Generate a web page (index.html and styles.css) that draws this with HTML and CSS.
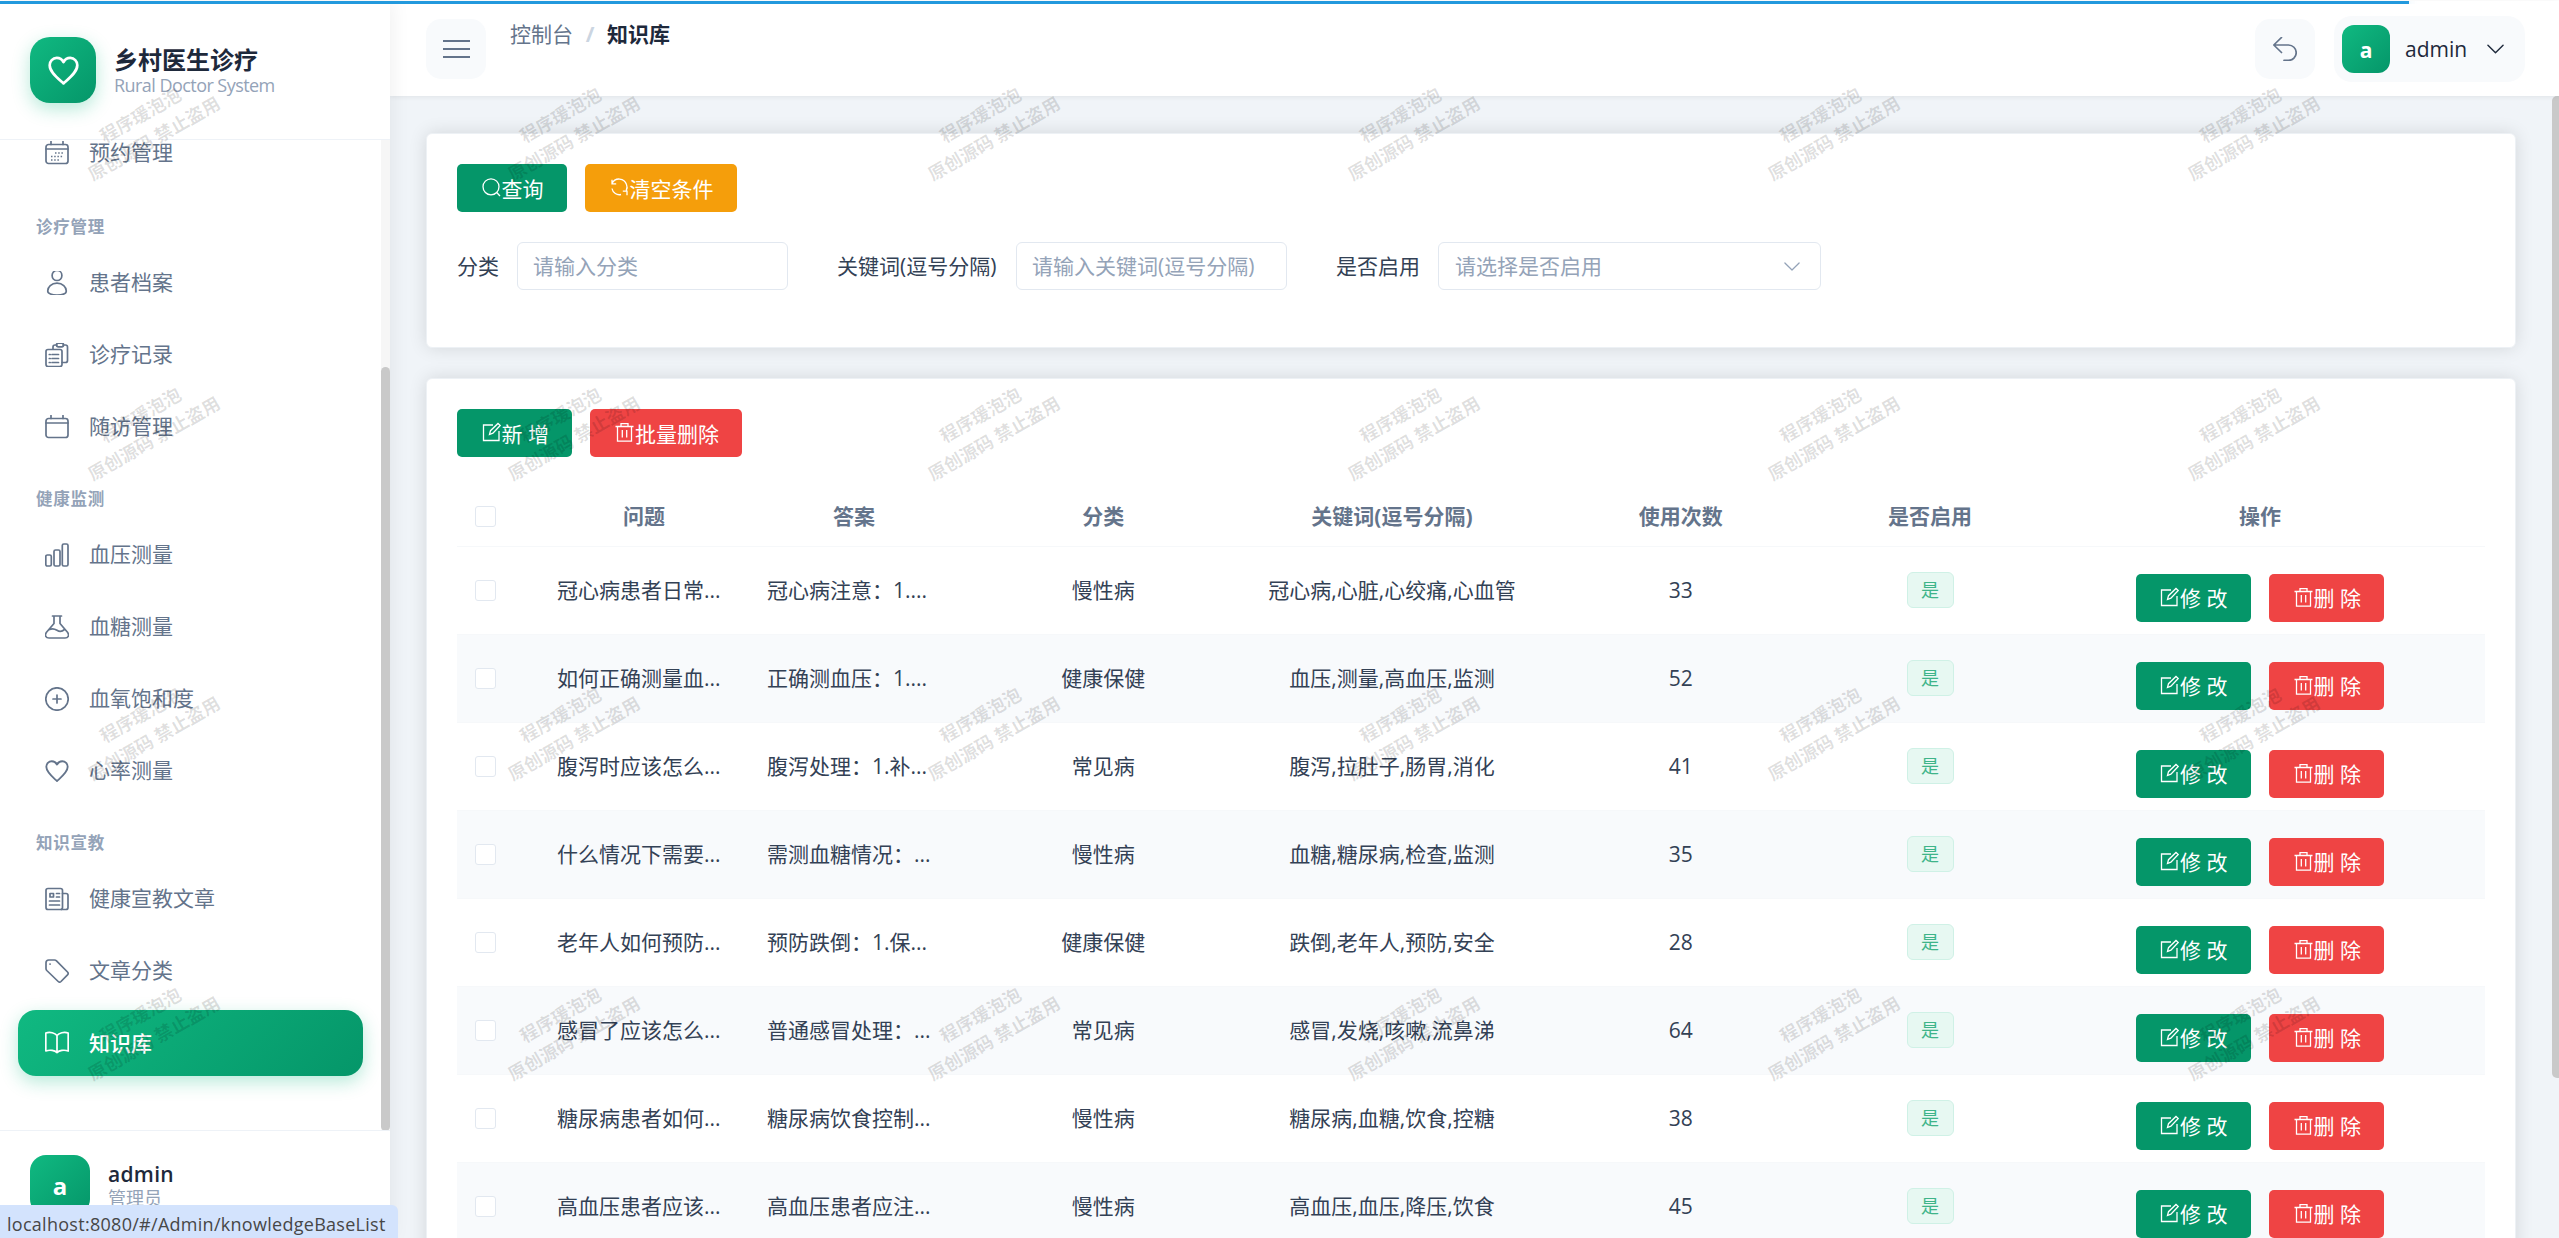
FILE: index.html
```html
<!DOCTYPE html>
<html lang="zh-CN">
<head>
    <meta charset="UTF-8">
    <title>知识库 | 乡村医生诊疗</title>
    <link rel="stylesheet" href="styles.css">
</head>
<body>
    <svg class="sprite" width="0" height="0">
        <symbol id="i-heart" viewBox="1 1 22 22"><path d="M12 21.2C8 17.6 2.200 13.200 2.200 8.200A5 5 0 0 1 7.200 3.100c2 0 3.800 1 4.800 2.900 1-1.900 2.800-2.900 4.800-2.900a5 5 0 0 1 5 5.100c0 5-5.800 9.400-9.800 13z"/></symbol>
        <symbol id="i-date" viewBox="0 0 24 24"><rect x="1" y="3.500" width="22" height="19" rx="2.500"/><path d="M1 8h22M6 .5v3M18 .5v3"/><path class="dots" d="M10 12h8.500M6 15.500h12.500M6 19h8.500"/></symbol>
        <symbol id="i-calendar" viewBox="0 0 24 24"><rect x="1" y="3.500" width="22" height="19" rx="2.500"/><path d="M1 8h22M6 .5v3M18 .5v3"/></symbol>
        <symbol id="i-user" viewBox="0 0 24 24"><ellipse cx="12" cy="4.500" rx="4.900" ry="5"/><path d="M2.700 20c0-4 3.700-7.800 9.300-7.800s9.300 3.800 9.300 7.800c0 2.800-4.400 4-9.300 4s-9.300-1.200-9.300-4z"/></symbol>
        <symbol id="i-record" viewBox="0 0 24 24"><path d="M8 6V4a2 2 0 0 1 2-2h2M18 2h2.500a2 2 0 0 1 2 2v13.500a2 2 0 0 1-2 2H17"/><rect x="11.500" y="0.200" width="7" height="3.600" rx="1.500"/><rect x="1" y="6.500" width="16" height="17" rx="2"/><path d="M7 11.500h6.500M7 15.500h6.500M7 19.500h6.500M4.300 11.500h.9M4.300 15.500h.9M4.300 19.500h.9"/></symbol>
        <symbol id="i-bars" viewBox="0 0 24 24"><rect x="0.800" y="12" width="5.500" height="11" rx="1.500"/><rect x="9" y="7" width="6" height="16" rx="1.500"/><rect x="17.300" y="1" width="5.700" height="22" rx="1.500"/></symbol>
        <symbol id="i-flask" viewBox="0 0 24 24"><path d="M7.500 1h9M9 1v7.500L1.500 17.300C-.8 20.500 1 23 4 23h16c3 0 4.800-2.500 2.500-5.700L15 8.500V1M4.500 14.500c3-1.500 5.500-.5 7.500.8s5 1.500 7.500-.8"/></symbol>
        <symbol id="i-plus" viewBox="0 0 24 24"><circle cx="12" cy="12" r="11.200"/><path d="M12 8v8M8 12h8"/></symbol>
        <symbol id="i-news" viewBox="0 0 24 24"><rect x="1" y="1.500" width="16.500" height="21" rx="2"/><path d="M17.500 6.500H21a2 2 0 0 1 2 2V20.500a2 2 0 0 1-2 2h-4.500M4.500 14h10M4.500 18h10M11.500 6.500h3M11.500 10h3"/><rect x="5" y="6.500" width="3.500" height="3.500"/></symbol>
        <symbol id="i-tag" viewBox="0 0 24 24"><path d="M1 9.500V3.800A2.800 2.800 0 0 1 3.800 1H9.500a3 3 0 0 1 2 .8l11 11.200a2 2 0 0 1 0 2.800l-6.500 6.700a2 2 0 0 1-2.800 0L1.800 11.500a3 3 0 0 1-.8-2z"/><path d="M5 5.100h.1"/></symbol>
        <symbol id="i-book" viewBox="0 0 24 24"><path d="M12 4.500C10 2 5 .5.800 2v18c4.200-1.500 9-.5 11.200 1.500C14.200 19.500 19 18.500 23.200 20V2C19 .5 14 2 12 4.500zM12 4.500v17"/></symbol>
        <symbol id="i-menu" viewBox="0 0 27 24"><path d="M0 4h27M0 12h27M0 20h27"/></symbol>
        <symbol id="i-back" viewBox="0 0 24 24"><path d="M8.500 .5.800 8l7.700 7.500M.8 8h14.700a7.700 7.700 0 0 1 0 15.400H11"/></symbol>
        <symbol id="i-down" viewBox="0 0 18 10"><path d="M1 1l8 8 8-8"/></symbol>
        <symbol id="i-search" viewBox="0 0 21 21"><circle cx="10" cy="9.800" r="8"/><path d="M15.700 15.500l3.300 3.500"/></symbol>
        <symbol id="i-refresh" viewBox="0 0 21 21"><path d="M3 2.800v4h4.200M3 6.500A7.800 7.800 0 0 1 17.500 7.500c1 2.200.8 4-.3 6M18 18.200V14.200H13.800M12 17.500C8 18.500 3.800 16 3 11.500"/></symbol>
        <symbol id="i-edit" viewBox="0 0 21 21"><path d="M12 3H2.500v15.500H18V9"/><path d="M8.500 12.500l1-3.800L17 1.500l2.200 2-7.300 7.700z"/></symbol>
        <symbol id="i-trash" viewBox="0 0 21 21"><path d="M1.500 4.500h18M7 4.200V1.700h7v2.500M3.500 4.500v14.700h14V4.500M8.300 8v7.500M12.700 8v7.500"/></symbol>
    </svg>

    <div class="progress"></div>

    <div class="layout">
        <div class="sidebar">
            <div class="brand">
                <div class="logo"><svg><use href="#i-heart"/></svg></div>
                <div class="brand-text">
                    <div class="brand-title">乡村医生诊疗</div>
                    <div class="brand-sub">Rural Doctor System</div>
                </div>
            </div>
            <div class="menu-wrap">
                <div class="menu">
                    <a class="menu-item"><svg><use href="#i-date"/></svg><span>预约管理</span></a>
                    <div class="menu-title">诊疗管理</div>
                    <a class="menu-item"><svg><use href="#i-user"/></svg><span>患者档案</span></a>
                    <a class="menu-item"><svg><use href="#i-record"/></svg><span>诊疗记录</span></a>
                    <a class="menu-item"><svg><use href="#i-calendar"/></svg><span>随访管理</span></a>
                    <div class="menu-title">健康监测</div>
                    <a class="menu-item"><svg><use href="#i-bars"/></svg><span>血压测量</span></a>
                    <a class="menu-item"><svg><use href="#i-flask"/></svg><span>血糖测量</span></a>
                    <a class="menu-item"><svg><use href="#i-plus"/></svg><span>血氧饱和度</span></a>
                    <a class="menu-item"><svg><use href="#i-heart"/></svg><span>心率测量</span></a>
                    <div class="menu-title">知识宣教</div>
                    <a class="menu-item"><svg><use href="#i-news"/></svg><span>健康宣教文章</span></a>
                    <a class="menu-item"><svg><use href="#i-tag"/></svg><span>文章分类</span></a>
                    <a class="menu-item active"><svg><use href="#i-book"/></svg><span>知识库</span></a>
                </div>
                <div class="menu-track"><div class="menu-thumb"></div></div>
            </div>
            <div class="side-user">
                <div class="avatar avatar-lg">a</div>
                <div class="side-user-text">
                    <div class="side-user-name">admin</div>
                    <div class="side-user-role">管理员</div>
                </div>
            </div>
        </div>

        <div class="main">
            <div class="topbar">
                <button class="square-button"><svg class="menu-icon"><use href="#i-menu"/></svg></button>
                <div class="breadcrumb">
                    <span>控制台</span><b class="slash">/</b><b>知识库</b>
                </div>
                <button class="square-button back"><svg class="back-icon"><use href="#i-back"/></svg></button>
                <div class="user-box">
                    <div class="avatar">a</div>
                    <span class="user-name">admin</span>
                    <svg class="user-arrow"><use href="#i-down"/></svg>
                </div>
            </div>

            <div class="content">
                <div class="pages">
                    <div class="card search-card">
                        <div class="buttons">
                            <button class="btn btn-green"><svg><use href="#i-search"/></svg>查询</button>
                            <button class="btn btn-orange"><svg><use href="#i-refresh"/></svg>清空条件</button>
                        </div>
                        <div class="search-form">
                            <label class="label-category">分类</label>
                            <input class="field" type="text" placeholder="请输入分类">
                            <label class="label-keyword">关键词(逗号分隔)</label>
                            <input class="field" type="text" placeholder="请输入关键词(逗号分隔)">
                            <label class="label-enabled">是否启用</label>
                            <div class="field select"><span>请选择是否启用</span><svg><use href="#i-down"/></svg></div>
                        </div>
                    </div>

                    <div class="card table-card">
                        <div class="buttons">
                            <button class="btn btn-green"><svg><use href="#i-edit"/></svg>新 增</button>
                            <button class="btn btn-red"><svg><use href="#i-trash"/></svg>批量删除</button>
                        </div>
                        <table class="table">
                            <colgroup>
                                <col class="col-check"><col class="col-text"><col class="col-text">
                                <col><col><col>
                                <col class="col-text"><col class="col-action">
                            </colgroup>
                            <thead>
                                <tr>
                                    <th class="check"><span class="checkbox"></span></th>
                                    <th>问题</th>
                                    <th>答案</th>
                                    <th>分类</th>
                                    <th>关键词(逗号分隔)</th>
                                    <th>使用次数</th>
                                    <th>是否启用</th>
                                    <th>操作</th>
                                </tr>
                            </thead>
                            <tbody id="rows"></tbody>
                        </table>
                    </div>
                </div>
                <div class="page-thumb"></div>
            </div>
        </div>
    </div>

    <div class="watermark" id="watermark"></div>
    <div class="status-bar">localhost:8080/#/Admin/knowledgeBaseList</div>

    <script>
        const rows = [
            ['冠心病患者日常...', '冠心病注意：1....', '慢性病', '冠心病,心脏,心绞痛,心血管', 33],
            ['如何正确测量血...', '正确测血压：1....', '健康保健', '血压,测量,高血压,监测', 52],
            ['腹泻时应该怎么...', '腹泻处理：1.补...', '常见病', '腹泻,拉肚子,肠胃,消化', 41],
            ['什么情况下需要...', '需测血糖情况：...', '慢性病', '血糖,糖尿病,检查,监测', 35],
            ['老年人如何预防...', '预防跌倒：1.保...', '健康保健', '跌倒,老年人,预防,安全', 28],
            ['感冒了应该怎么...', '普通感冒处理：...', '常见病', '感冒,发烧,咳嗽,流鼻涕', 64],
            ['糖尿病患者如何...', '糖尿病饮食控制...', '慢性病', '糖尿病,血糖,饮食,控糖', 38],
            ['高血压患者应该...', '高血压患者应注...', '慢性病', '高血压,血压,降压,饮食', 45]
        ];

        document.getElementById('rows').innerHTML = rows.map(row => `
            <tr>
                <td class="check"><span class="checkbox"></span></td>
                <td class="long">${row[0]}</td>
                <td class="long">${row[1]}</td>
                <td>${row[2]}</td>
                <td>${row[3]}</td>
                <td>${row[4]}</td>
                <td><span class="tag">是</span></td>
                <td class="action">
                    <div class="actions">
                        <button class="btn btn-green"><svg><use href="#i-edit"/></svg>修 改</button>
                        <button class="btn btn-red"><svg><use href="#i-trash"/></svg>删 除</button>
                    </div>
                </td>
            </tr>
        `).join('');

        // 6 x 4 watermark tiles
        document.getElementById('watermark').innerHTML =
            '<div class="mark"><p>程序瑗泡泡<br>原创源码 禁止盗用</p></div>'.repeat(24);
    </script>
</body>
</html>
```
FILE: styles.css
```css
* {
    box-sizing: border-box;
}
body {
    margin: 0;
    padding-top: 1px;
    height: 1238px;
    overflow: hidden;
    font-family: "Open Sans", "Noto Sans CJK SC", sans-serif;
    font-size: 21px;
    line-height: 30px;
    color: #334155;
    background-color: #fff;
}
button, input {
    font-family: inherit;
    font-size: 21px;
}
svg {
    fill: none;
    stroke: currentColor;
    stroke-width: 1.7;
    stroke-linejoin: round;
    stroke-linecap: round;
    overflow: visible;
    flex-shrink: 0;
}
.sprite {
    position: absolute;
}
.dots {
    stroke-dasharray: 1.5 1.7;
    stroke-linecap: butt;
}
.progress {
    position: absolute;
    z-index: 20;
    top: 1px;
    left: 0;
    width: 2409px;
    height: 3px;
    background-color: #29d;
    box-shadow: 0 0 8px rgba(34, 153, 221, 0.4);
    clip-path: inset(0 -12px 0 0);
}
.layout {
    display: flex;
    height: 1237px;
}

/* sidebar */
.sidebar {
    width: 390px;
    flex-shrink: 0;
    display: flex;
    flex-direction: column;
    background-color: #fff;
    box-shadow: 3px 0 18px rgba(0, 0, 0, 0.06);
    z-index: 2;
}
.brand {
    display: flex;
    align-items: center;
    gap: 18px;
    height: 139px;
    padding: 0 30px;
    border-bottom: 1px solid #eef2f7;
    flex-shrink: 0;
}
.brand-text {
    padding-top: 2px;
}
.logo {
    width: 66px;
    height: 66px;
    border-radius: 20px;
    background: linear-gradient(135deg, #10b981, #059669);
    box-shadow: 0 6px 18px rgba(16, 185, 129, 0.3);
    color: #fff;
    display: flex;
    align-items: center;
    justify-content: center;
}
.logo svg {
    width: 31px;
    height: 31px;
    stroke-width: 1.9;
}
.brand-title {
    font-size: 24px;
    font-weight: bold;
    line-height: 28px;
    color: #1e293b;
}
.brand-sub {
    font-size: 18px;
    line-height: 22px;
    color: #94a3b8;
    letter-spacing: -0.55px;
}
.menu-wrap {
    flex: 1;
    min-height: 0;
    display: flex;
    overflow: hidden;
}
.menu {
    width: 381px;
    padding: 0 18px;
    margin-top: -20px;
}
.menu-item {
    display: flex;
    align-items: center;
    gap: 20px;
    height: 66px;
    padding-left: 27px;
    margin-bottom: 6px;
    border-radius: 18px;
    color: #64748b;
}
.menu-item:first-child {
    margin-bottom: 8px;
}
.menu-item svg {
    width: 24px;
    height: 24px;
}
.menu-item span {
    padding-bottom: 2px;
}
.menu-item.active {
    background: linear-gradient(135deg, #10b981, #059669);
    box-shadow: 0 6px 18px rgba(16, 185, 129, 0.3);
    color: #fff;
    font-weight: 500;
}
.menu-item.active span {
    padding-bottom: 0;
}
.menu-title {
    height: 56px;
    padding: 24px 18px 14px;
    font-size: 16.5px;
    line-height: 18px;
    letter-spacing: 0.75px;
    font-weight: bold;
    color: #94a3b8;
}
.menu-track {
    width: 9px;
    padding-top: 227px;
    background-color: #f6f6f6;
}
.menu-thumb {
    height: 764px;
    border-radius: 5px;
    background-color: #c9c9c9;
}
.side-user {
    display: flex;
    gap: 18px;
    height: 108px;
    padding: 24px 30px 0;
    border-top: 1px solid #eef2f7;
    flex-shrink: 0;
}
.side-user-text {
    padding-top: 6px;
}
.side-user-name {
    font-weight: 600;
    line-height: 26px;
    letter-spacing: 0.3px;
    color: #1e293b;
}
.side-user-role {
    font-size: 18px;
    line-height: 23px;
    color: #94a3b8;
}
.avatar {
    width: 48px;
    height: 48px;
    border-radius: 12px;
    background: linear-gradient(135deg, #10b981, #059669);
    color: #fff;
    font-weight: bold;
    line-height: 50px;
    text-align: center;
}
.avatar-lg {
    width: 60px;
    height: 60px;
    border-radius: 16px;
    font-size: 24px;
    line-height: 62px;
}

/* top bar */
.main {
    flex: 1;
    min-width: 0;
    display: flex;
    flex-direction: column;
}
.topbar {
    display: flex;
    align-items: center;
    height: 95px;
    flex-shrink: 0;
    padding: 1px 34px 0 36px;
    background-color: #fff;
    box-shadow: 0 1px 5px rgba(0, 0, 0, 0.07);
    z-index: 1;
}
.square-button {
    display: flex;
    align-items: center;
    justify-content: center;
    width: 60px;
    height: 60px;
    padding: 0;
    border: none;
    border-radius: 15px;
    background-color: #f8fafc;
    color: #64748b;
}
.menu-icon {
    width: 27px;
    height: 24px;
    stroke-width: 2.2;
}
.back-icon {
    width: 24px;
    height: 24px;
}
.breadcrumb {
    align-self: flex-start;
    display: flex;
    margin-left: 24px;
    padding-top: 17px;
    color: #64748b;
}
.breadcrumb b {
    color: #1e293b;
}
.breadcrumb .slash {
    width: 34px;
    text-align: center;
    color: #cbd5e1;
}
.back {
    margin-left: auto;
}
.user-box {
    display: flex;
    align-items: center;
    width: 191px;
    height: 66px;
    margin-left: 19px;
    padding-left: 8px;
    border-radius: 18px;
    background-color: #f8fafc;
    color: #1e293b;
}
.user-name {
    width: 82px;
    margin-left: 15px;
}
.user-arrow {
    width: 17px;
    height: 10px;
    stroke-width: 1.5;
}

/* content */
.content {
    flex: 1;
    min-height: 0;
    display: flex;
    overflow: hidden;
    background-color: #f0f4f8;
}
.pages {
    flex: 1;
    padding: 37px 36px 0;
}
.page-thumb {
    width: 7px;
    height: 982px;
    border-radius: 5px 0 0 5px;
    background-color: #c9c9c9;
}
.card {
    padding: 30px;
    background-color: #fff;
    border: 1px solid #edf1f5;
    border-radius: 6px;
    box-shadow: 0 0 18px rgba(0, 0, 0, 0.12);
}
.search-card {
    height: 215px;
    margin-bottom: 30px;
}
.table-card {
    height: 1200px;
}
.buttons {
    display: flex;
    gap: 18px;
}
.btn {
    display: flex;
    align-items: center;
    justify-content: center;
    height: 48px;
    padding: 0 23.500px 1px;
    border: none;
    border-radius: 5px;
    color: #fff;
    white-space: nowrap;
}
.btn svg {
    width: 21px;
    height: 21px;
    stroke-width: 1.3;
    stroke-linejoin: miter;
    stroke-linecap: butt;
}
.btn-green {
    background-color: #059669;
}
.btn-orange {
    background-color: #f59e0b;
}
.btn-red {
    background-color: #ef4444;
}
.search-form {
    display: flex;
    align-items: center;
    margin-top: 30px;
}
.label-category {
    width: 60px;
}
.label-keyword {
    width: 179px;
    margin-left: 49px;
}
.label-enabled {
    width: 102px;
    margin-left: 49px;
}
.field {
    width: 271px;
    height: 48px;
    padding: 0 15px;
    border: 1px solid #e2e8f0;
    border-radius: 6px;
    background-color: #fff;
}
.field::placeholder {
    color: #94a3b8;
    opacity: 1;
}
.select {
    display: flex;
    align-items: center;
    justify-content: space-between;
    width: 383px;
    padding: 0 20px 0 16px;
    color: #94a3b8;
}
.select svg {
    width: 16px;
    height: 9px;
    stroke-width: 1.4;
}

/* table */
.table {
    width: 2028px;
    margin-top: 30px;
    table-layout: fixed;
    border-collapse: collapse;
}
.col-check {
    width: 82px;
}
.col-text {
    width: 210px;
}
.col-action {
    width: 450px;
}
.table th, .table td {
    padding: 0;
    text-align: center;
    border-bottom: 1px solid #f6f8fa;
}
.table th {
    height: 59px;
    font-weight: bold;
    color: #64748b;
}
.table td {
    height: 88px;
}
.table tr:nth-child(even) td {
    background-color: #f8fafc;
}
.table .check {
    padding-left: 18px;
    text-align: left;
}
.table .long {
    padding-left: 18px;
    text-align: left;
    white-space: nowrap;
}
.checkbox {
    display: block;
    width: 21px;
    height: 21px;
    border: 1px solid #e2e8f0;
    border-radius: 3px;
    background-color: #fff;
}
.tag {
    display: inline-block;
    width: 47px;
    height: 36px;
    border: 1px solid #cff1e6;
    border-radius: 6px;
    background-color: #e7f8f2;
    color: #3eb489;
    font-size: 18px;
    line-height: 34px;
    vertical-align: middle;
}
.actions {
    display: flex;
    justify-content: center;
    gap: 18px;
    padding-top: 15px;
}

/* overlays */
.watermark {
    position: absolute;
    z-index: 30;
    top: -23px;
    left: -63px;
    display: grid;
    grid-template-columns: repeat(6, 420px);
    grid-auto-rows: 300px;
    pointer-events: none;
}
.mark {
    display: flex;
    align-items: center;
    justify-content: center;
}
.mark p {
    margin: 0;
    font-size: 18px;
    font-weight: bold;
    line-height: 27px;
    text-align: center;
    color: rgba(0, 0, 0, 0.13);
    transform: rotate(-30deg);
}
.status-bar {
    position: absolute;
    z-index: 40;
    left: 0;
    bottom: 0;
    width: 398px;
    height: 33px;
    padding-left: 7px;
    border-radius: 0 6px 0 0;
    background-color: #d3e3fd;
    color: #474747;
    font-size: 18px;
    line-height: 38px;
    letter-spacing: 0.28px;
    white-space: nowrap;
}
```
